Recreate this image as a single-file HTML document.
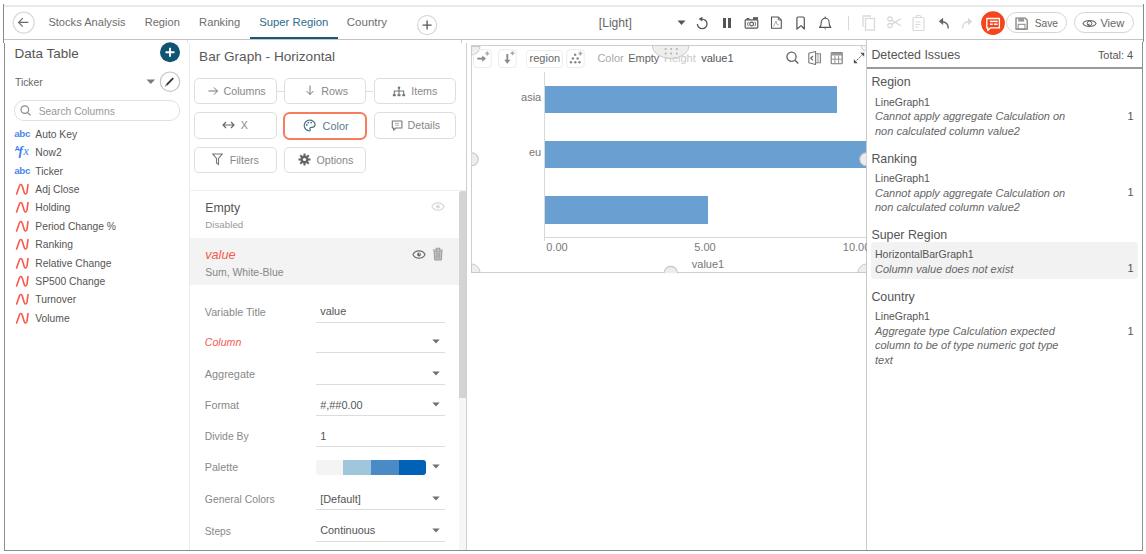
<!DOCTYPE html>
<html><head><meta charset="utf-8"><style>
html,body{margin:0;padding:0;width:1146px;height:554px;overflow:hidden;background:#fff}
body{position:relative;font-family:"Liberation Sans", sans-serif}
body>div{position:absolute}
.t{white-space:nowrap;line-height:1}
</style></head><body>
<div style="left:0px;top:0px;width:1146px;height:554px;background:#fff"></div>
<div style="left:4px;top:5px;width:1140px;height:2px;background:#e8e9ec"></div>
<div style="left:3px;top:4px;width:1px;height:38.5px;background:#8a8a8a"></div>
<div style="left:4px;top:42.5px;width:1px;height:508.5px;background:#8e8e8e"></div>
<div style="left:4px;top:550px;width:1139px;height:1px;background:#8e8e8e"></div>
<div style="left:1143px;top:4px;width:1px;height:38px;background:#8a8a8a"></div>
<div style="left:1142px;top:42px;width:1px;height:509px;background:#8e8e8e"></div>
<div style="left:4px;top:39px;width:1139px;height:1px;background:#c4c4c4"></div>
<svg style="position:absolute;left:12px;top:11px" width="24" height="24" viewBox="0 0 24 24"><circle cx="11.7" cy="11.6" r="10.5" fill="none" stroke="#dcdcdc" stroke-width="1.3"/><path d="M6.8 11.4h9.6M10.8 7.1l-4.2 4.3 4.2 4.3" fill="none" stroke="#6a6a6a" stroke-width="1.2"/></svg>
<div class="t" style="left:48.4px;top:17.40px;font-size:11.1px;color:#6d6d6d;">Stocks Analysis</div>
<div class="t" style="left:144.7px;top:17.40px;font-size:11.1px;color:#6d6d6d;">Region</div>
<div class="t" style="left:199.1px;top:17.40px;font-size:11.2px;color:#6d6d6d;">Ranking</div>
<div class="t" style="left:259.2px;top:17.40px;font-size:11.3px;color:#2e6b8c;">Super Region</div>
<div class="t" style="left:346.8px;top:17.40px;font-size:11.5px;color:#6d6d6d;">Country</div>
<div style="left:250px;top:37px;width:88px;height:2px;background:#1b5876"></div>
<svg style="position:absolute;left:416px;top:14px" width="22" height="22" viewBox="0 0 22 22"><circle cx="11.1" cy="11.1" r="9.6" fill="none" stroke="#d6d6d6" stroke-width="1.2"/><path d="M11.1 6.6v9M6.6 11.1h9" stroke="#555" stroke-width="1.3"/></svg>
<div class="t" style="left:598.8px;top:16.70px;font-size:12.1px;color:#666;">[Light]</div>
<svg style="position:absolute;left:677px;top:20px" width="9" height="6" viewBox="0 0 9 6"><path d="M0.5 0.5h8l-4 4.5z" fill="#555"/></svg>
<svg style="position:absolute;left:695px;top:17px" width="14" height="14" viewBox="0 0 14 14"><path d="M7.2 2.1A4.8 4.8 0 1 1 2.4 6.9" fill="none" stroke="#555" stroke-width="1.3"/><path d="M3.6 2.1L7.4 -0.3V4.5z" fill="#555"/></svg>
<div style="left:723.2px;top:18px;width:2.8px;height:10px;background:#555"></div>
<div style="left:728.1px;top:18px;width:2.8px;height:10px;background:#555"></div>
<svg style="position:absolute;left:743px;top:16px" width="17" height="14" viewBox="0 0 17 14"><rect x="2.2" y="3.8" width="12.6" height="8.3" rx="0.8" fill="none" stroke="#555" stroke-width="1.2"/><path d="M3 3.5l1-1.6h2l1 1.6" fill="#555"/><rect x="10" y="1.2" width="5" height="2.4" fill="#555"/><path d="M5.3 5.8a4 4 0 0 0 0 4.4M11.9 5.8a4 4 0 0 1 0 4.4" fill="none" stroke="#666" stroke-width="0.9"/><circle cx="8.6" cy="8" r="1.9" fill="none" stroke="#555" stroke-width="1.1"/></svg>
<svg style="position:absolute;left:769px;top:16px" width="14" height="15" viewBox="0 0 14 15"><path d="M2.5 1h6.8l3 3v8.3h-9.8z" fill="none" stroke="#555" stroke-width="1.1"/><path d="M9.3 1v3h3" fill="none" stroke="#666" stroke-width="0.9"/><path d="M4.5 10.5l2.5-5.5 0.6 3 2.5 1" fill="none" stroke="#999" stroke-width="0.8"/></svg>
<svg style="position:absolute;left:795px;top:16px" width="12" height="15" viewBox="0 0 12 15"><path d="M1.9 13V2.2q0-1.2 1.2-1.2h5q1.2 0 1.2 1.2V13L6.1 9.6z" fill="none" stroke="#555" stroke-width="1.2" stroke-linejoin="round"/></svg>
<svg style="position:absolute;left:818px;top:16px" width="15" height="15" viewBox="0 0 15 15"><path d="M1.5 11.4c1.6-1.4 1.8-2.8 1.8-5.2a3.9 3.9 0 0 1 7.8 0c0 2.4 .2 3.8 1.8 5.2z" fill="none" stroke="#555" stroke-width="1.1" stroke-linejoin="round"/><path d="M6.2 12.5h2l-1 1.2z" fill="#555"/><circle cx="7.2" cy="1.2" r=".8" fill="#555"/></svg>
<div style="left:848px;top:16px;width:1px;height:14px;background:#d8d8d8"></div>
<svg style="position:absolute;left:861px;top:14px" width="17" height="18" viewBox="0 0 17 18"><rect x="4.5" y="4.5" width="9" height="11.5" fill="none" stroke="#d9d9d9" stroke-width="1.3"/><path d="M2 13V2h8" fill="none" stroke="#d9d9d9" stroke-width="1.3"/></svg>
<svg style="position:absolute;left:887px;top:16px" width="15" height="13" viewBox="0 0 15 13"><circle cx="3" cy="3" r="2.2" fill="none" stroke="#d5d5d5" stroke-width="1.2"/><circle cx="3" cy="9.5" r="2.2" fill="none" stroke="#d5d5d5" stroke-width="1.2"/><path d="M4.8 4.2l9 5.5M4.8 8.3l9-5.5" stroke="#d5d5d5" stroke-width="1.2"/></svg>
<svg style="position:absolute;left:912px;top:14px" width="13" height="18" viewBox="0 0 13 18"><rect x="1" y="3.5" width="11" height="13" rx="1" fill="none" stroke="#dadada" stroke-width="1.2"/><path d="M4 3.5l1-2h3l1 2z" fill="none" stroke="#dadada" stroke-width="1.1"/><path d="M3.5 8h5M3.5 10.5h5M3.5 13h3" stroke="#dadada" stroke-width="1"/></svg>
<svg style="position:absolute;left:938px;top:17px" width="12" height="12" viewBox="0 0 12 12"><path d="M10.3 11.5c0-4-2-6.8-6.5-6.8" fill="none" stroke="#666" stroke-width="1.4"/><path d="M0.8 4.3l4.3-3.6v7.4z" fill="#666"/></svg>
<svg style="position:absolute;left:961px;top:17px" width="12" height="12" viewBox="0 0 12 12"><path d="M1.5 11.5c0-4 2-7 7-7" fill="none" stroke="#d8d8d8" stroke-width="1.3"/><path d="M11.2 4.5l-4.2-3.8v7.6z" fill="#d8d8d8"/></svg>
<svg style="position:absolute;left:981px;top:10.5px" width="25" height="25" viewBox="0 0 25 25"><circle cx="12" cy="12.1" r="11.9" fill="#f4461c"/><path d="M5.8 7.5h12.6v9.4h-9l-2.6 2.6v-2.6h-1z" fill="none" stroke="#fff" stroke-width="1.3" stroke-linejoin="round"/><path d="M9 10.4h7.6" stroke="#fff" stroke-width="1.5"/><path d="M9 13.2h2.8M13 13.2h3.6" stroke="#fff" stroke-width="1.5"/></svg>
<div style="left:1006px;top:11.5px;width:61px;height:21.5px;border:1px solid #d4d4d4;border-radius:11px;box-sizing:border-box"></div>
<svg style="position:absolute;left:1015px;top:17px" width="13" height="13" viewBox="0 0 13 13"><path d="M1 1h9.2l2 2v9.2H1z" fill="none" stroke="#777" stroke-width="1.2"/><rect x="3.2" y="1" width="6" height="3.6" fill="#999"/><rect x="3.2" y="7.3" width="6.8" height="4.9" fill="none" stroke="#888" stroke-width="1"/></svg>
<div class="t" style="left:1034.7px;top:18.70px;font-size:10.2px;color:#666;">Save</div>
<div style="left:1073.5px;top:11.5px;width:60px;height:21.5px;border:1px solid #d4d4d4;border-radius:11px;box-sizing:border-box"></div>
<svg style="position:absolute;left:1082px;top:18px" width="15" height="11" viewBox="0 0 15 11"><path d="M0.9 5.5C3.2 1.6 11.8 1.6 14.1 5.5 11.8 9.4 3.2 9.4 0.9 5.5z" fill="none" stroke="#666" stroke-width="1.05"/><circle cx="7.5" cy="5.5" r="2.3" fill="none" stroke="#666" stroke-width="1"/><path d="M7.5 5.5L5.4 6.6A2.3 2.3 0 0 0 7.5 7.8z" fill="#666"/></svg>
<div class="t" style="left:1100.4px;top:17.70px;font-size:11.1px;color:#666;">View</div>
<div style="left:189px;top:43px;width:1px;height:507px;background:#ececec"></div>
<div style="left:186.5px;top:40px;width:1px;height:3px;background:#e0e0e0"></div>
<div class="t" style="left:14.5px;top:46.80px;font-size:13.5px;color:#555;">Data Table</div>
<svg style="position:absolute;left:159px;top:42px" width="22" height="22" viewBox="0 0 22 22"><circle cx="11" cy="10.3" r="10" fill="#0f5472"/><path d="M11 5.8v9M6.5 10.3h9" stroke="#fff" stroke-width="1.9"/></svg>
<div class="t" style="left:15px;top:78.10px;font-size:10.3px;color:#666;">Ticker</div>
<svg style="position:absolute;left:145.5px;top:78.6px" width="10" height="6" viewBox="0 0 10 6"><path d="M0.5 0.5h8.6l-4.3 4.6z" fill="#7a7a7a"/></svg>
<svg style="position:absolute;left:159px;top:71px" width="22" height="22" viewBox="0 0 22 22"><circle cx="11" cy="10.7" r="9.7" fill="none" stroke="#c4c4c4" stroke-width="1.2"/><path d="M7.6 13.8l6.6-6.6" stroke="#333" stroke-width="1.9"/><path d="M6.2 15.2l1.6-1.6" stroke="#c07a40" stroke-width="1.3"/></svg>
<div style="left:13.9px;top:100.3px;width:166px;height:20.4px;border:1.2px solid #e0e0e0;border-radius:10px;box-sizing:border-box"></div>
<svg style="position:absolute;left:19px;top:103.5px" width="13" height="13" viewBox="0 0 13 13"><circle cx="5.8" cy="5.6" r="3.8" fill="none" stroke="#8a8a8a" stroke-width="1.2"/><path d="M8.5 8.4l3 3" stroke="#8a8a8a" stroke-width="1.3"/></svg>
<div class="t" style="left:38.7px;top:106.50px;font-size:10.3px;color:#999;">Search Columns</div>
<div class="t" style="left:35.3px;top:129.80px;font-size:10.3px;color:#555;">Auto Key</div>
<div class="t" style="left:14.2px;top:129.00px;font-size:9.8px;color:#4d86ee;font-weight:bold;letter-spacing:-0.35px">abc</div>
<div class="t" style="left:35.3px;top:148.19px;font-size:10.3px;color:#555;">Now2</div>
<div class="t" style="left:18.6px;top:143.99px;font-size:13.5px;color:#3f80f0;font-family:'Liberation Serif',serif;font-style:italic;font-weight:bold">f</div>
<div class="t" style="left:23.6px;top:144.89px;font-size:12px;color:#3f80f0;font-family:'Liberation Serif',serif;font-style:italic">x</div>
<div class="t" style="left:14.8px;top:145.79px;font-size:6.8px;color:#3f80f0;font-weight:bold">A</div>
<div class="t" style="left:35.3px;top:166.58px;font-size:10.3px;color:#555;">Ticker</div>
<div class="t" style="left:14.2px;top:165.78px;font-size:9.8px;color:#4d86ee;font-weight:bold;letter-spacing:-0.35px">abc</div>
<div class="t" style="left:35.3px;top:184.97px;font-size:10.3px;color:#555;">Adj Close</div>
<svg style="position:absolute;left:15px;top:182.96999999999997px" width="14" height="13" viewBox="0 0 14 13"><path d="M1.6 11L4.3 3.2Q5 1.3 6 1.5T7.4 3.6L9.2 9.4Q9.7 11.2 10.6 11T12 9.2L13 1.6" fill="none" stroke="#f65a4c" stroke-width="1.6" stroke-linecap="round" stroke-linejoin="round"/></svg>
<div class="t" style="left:35.3px;top:203.36px;font-size:10.3px;color:#555;">Holding</div>
<svg style="position:absolute;left:15px;top:201.35999999999999px" width="14" height="13" viewBox="0 0 14 13"><path d="M1.6 11L4.3 3.2Q5 1.3 6 1.5T7.4 3.6L9.2 9.4Q9.7 11.2 10.6 11T12 9.2L13 1.6" fill="none" stroke="#f65a4c" stroke-width="1.6" stroke-linecap="round" stroke-linejoin="round"/></svg>
<div class="t" style="left:35.3px;top:221.75px;font-size:10.3px;color:#555;">Period Change %</div>
<svg style="position:absolute;left:15px;top:219.75px" width="14" height="13" viewBox="0 0 14 13"><path d="M1.6 11L4.3 3.2Q5 1.3 6 1.5T7.4 3.6L9.2 9.4Q9.7 11.2 10.6 11T12 9.2L13 1.6" fill="none" stroke="#f65a4c" stroke-width="1.6" stroke-linecap="round" stroke-linejoin="round"/></svg>
<div class="t" style="left:35.3px;top:240.14px;font-size:10.3px;color:#555;">Ranking</div>
<svg style="position:absolute;left:15px;top:238.14px" width="14" height="13" viewBox="0 0 14 13"><path d="M1.6 11L4.3 3.2Q5 1.3 6 1.5T7.4 3.6L9.2 9.4Q9.7 11.2 10.6 11T12 9.2L13 1.6" fill="none" stroke="#f65a4c" stroke-width="1.6" stroke-linecap="round" stroke-linejoin="round"/></svg>
<div class="t" style="left:35.3px;top:258.53px;font-size:10.3px;color:#555;">Relative Change</div>
<svg style="position:absolute;left:15px;top:256.53000000000003px" width="14" height="13" viewBox="0 0 14 13"><path d="M1.6 11L4.3 3.2Q5 1.3 6 1.5T7.4 3.6L9.2 9.4Q9.7 11.2 10.6 11T12 9.2L13 1.6" fill="none" stroke="#f65a4c" stroke-width="1.6" stroke-linecap="round" stroke-linejoin="round"/></svg>
<div class="t" style="left:35.3px;top:276.92px;font-size:10.3px;color:#555;">SP500 Change</div>
<svg style="position:absolute;left:15px;top:274.92px" width="14" height="13" viewBox="0 0 14 13"><path d="M1.6 11L4.3 3.2Q5 1.3 6 1.5T7.4 3.6L9.2 9.4Q9.7 11.2 10.6 11T12 9.2L13 1.6" fill="none" stroke="#f65a4c" stroke-width="1.6" stroke-linecap="round" stroke-linejoin="round"/></svg>
<div class="t" style="left:35.3px;top:295.31px;font-size:10.3px;color:#555;">Turnover</div>
<svg style="position:absolute;left:15px;top:293.31px" width="14" height="13" viewBox="0 0 14 13"><path d="M1.6 11L4.3 3.2Q5 1.3 6 1.5T7.4 3.6L9.2 9.4Q9.7 11.2 10.6 11T12 9.2L13 1.6" fill="none" stroke="#f65a4c" stroke-width="1.6" stroke-linecap="round" stroke-linejoin="round"/></svg>
<div class="t" style="left:35.3px;top:313.70px;font-size:10.3px;color:#555;">Volume</div>
<svg style="position:absolute;left:15px;top:311.7px" width="14" height="13" viewBox="0 0 14 13"><path d="M1.6 11L4.3 3.2Q5 1.3 6 1.5T7.4 3.6L9.2 9.4Q9.7 11.2 10.6 11T12 9.2L13 1.6" fill="none" stroke="#f65a4c" stroke-width="1.6" stroke-linecap="round" stroke-linejoin="round"/></svg>
<div class="t" style="left:199.1px;top:49.90px;font-size:13.6px;color:#5a5a5a;">Bar Graph - Horizontal</div>
<div style="left:194px;top:77.5px;width:82.5px;height:26.5px;border:1px solid #dedede;border-radius:5px;box-sizing:border-box"></div>
<div class="t" style="left:223.5px;top:85.60px;font-size:10.7px;color:#888;">Columns</div>
<div style="left:283.7px;top:77.5px;width:82.5px;height:26.5px;border:1px solid #dedede;border-radius:5px;box-sizing:border-box"></div>
<div class="t" style="left:321.3px;top:85.60px;font-size:10.7px;color:#888;">Rows</div>
<div style="left:373.5px;top:77.5px;width:82.5px;height:26.5px;border:1px solid #dedede;border-radius:5px;box-sizing:border-box"></div>
<div class="t" style="left:411.2px;top:85.60px;font-size:10.7px;color:#888;">Items</div>
<div style="left:276.5px;top:90.5px;width:7px;height:1px;background:#dedede"></div>
<div style="left:366.2px;top:90.5px;width:7px;height:1px;background:#dedede"></div>
<div style="left:194px;top:112px;width:82.5px;height:26.5px;border:1px solid #dedede;border-radius:5px;box-sizing:border-box"></div>
<div class="t" style="left:240.8px;top:120.10px;font-size:10.7px;color:#888;">X</div>
<div style="left:283.1px;top:111.8px;width:84.2px;height:28px;border:2px solid #f57d5e;border-radius:6.5px;box-sizing:border-box"></div>
<div class="t" style="left:322.6px;top:120.80px;font-size:10.9px;color:#557a92;">Color</div>
<div style="left:373.5px;top:112px;width:82.5px;height:26.5px;border:1px solid #dedede;border-radius:5px;box-sizing:border-box"></div>
<div class="t" style="left:407.5px;top:120.10px;font-size:10.7px;color:#888;">Details</div>
<div style="left:194px;top:146.5px;width:82.5px;height:26.5px;border:1px solid #dedede;border-radius:5px;box-sizing:border-box"></div>
<div class="t" style="left:229.7px;top:154.60px;font-size:10.7px;color:#888;">Filters</div>
<div style="left:283.7px;top:146.5px;width:82.5px;height:26.5px;border:1px solid #dedede;border-radius:5px;box-sizing:border-box"></div>
<div class="t" style="left:316.5px;top:154.60px;font-size:10.7px;color:#888;">Options</div>
<svg style="position:absolute;left:207.5px;top:85.5px" width="11" height="10" viewBox="0 0 11 10"><path d="M0.5 5h9M6 1.5l3.5 3.5L6 8.5" fill="none" stroke="#777" stroke-width="1"/></svg>
<svg style="position:absolute;left:305px;top:85px" width="10" height="11" viewBox="0 0 10 11"><path d="M5 0.5v9M1.5 6l3.5 3.5L8.5 6" fill="none" stroke="#777" stroke-width="1"/></svg>
<svg style="position:absolute;left:392px;top:86px" width="14" height="11" viewBox="0 0 14 11"><path d="M7 2v2.5M2.3 9V5h9.4v4M7 5v4" fill="none" stroke="#777" stroke-width="1.1"/><circle cx="7" cy="1.8" r="1.3" fill="#777"/><rect x="0.8" y="8.2" width="3" height="2" fill="#777"/><rect x="5.5" y="8.2" width="3" height="2" fill="#777"/><rect x="10.2" y="8.2" width="3" height="2" fill="#777"/></svg>
<svg style="position:absolute;left:222px;top:120px" width="13" height="10" viewBox="0 0 13 10"><path d="M1 5h11M4 2L1 5l3 3M9 2l3 3-3 3" fill="none" stroke="#666" stroke-width="1.1"/></svg>
<svg style="position:absolute;left:303px;top:119px" width="13" height="13" viewBox="0 0 13 13"><path d="M6.5 1.2a5.3 5.3 0 1 0 0 10.6c1 0 1-1 .5-1.7-.6-.8 0-1.7 1-1.7h1.5a3 3 0 0 0 2.6-2.9c0-2.4-2.5-4.3-5.6-4.3z" fill="none" stroke="#4d7389" stroke-width="1.2"/><circle cx="3.8" cy="6" r=".9" fill="#4d7389"/><circle cx="5.3" cy="3.6" r=".9" fill="#4d7389"/><circle cx="8.2" cy="3.6" r=".9" fill="#4d7389"/></svg>
<svg style="position:absolute;left:391px;top:120px" width="12" height="12" viewBox="0 0 12 12"><path d="M1.3 1h9.6v7H4.8l-2.2 2.2V8H1.3z" fill="none" stroke="#777" stroke-width="1.1" stroke-linejoin="round"/><path d="M4 3.3h4M4.2 5.3h3.6" stroke="#999" stroke-width=".8"/></svg>
<svg style="position:absolute;left:212px;top:153px" width="11" height="13" viewBox="0 0 11 13"><path d="M0.8 1h9.4L6.5 5.5v6L4.5 10V5.5z" fill="none" stroke="#777" stroke-width="1.1"/></svg>
<svg style="position:absolute;left:298px;top:153px" width="13" height="13" viewBox="0 0 13 13"><g fill="#666"><circle cx="6.5" cy="6.5" r="4"/><rect x="5.5" y="0.5" width="2" height="12"/><rect x="0.5" y="5.5" width="12" height="2"/><rect x="5.5" y="0.5" width="2" height="12" transform="rotate(45 6.5 6.5)"/><rect x="5.5" y="0.5" width="2" height="12" transform="rotate(-45 6.5 6.5)"/></g><circle cx="6.5" cy="6.5" r="1.6" fill="#fff"/></svg>
<div style="left:190px;top:190px;width:276px;height:1px;background:#efefef"></div>
<div class="t" style="left:205.2px;top:202.00px;font-size:12.3px;color:#555;">Empty</div>
<div class="t" style="left:205.2px;top:219.90px;font-size:9.8px;color:#999;">Disabled</div>
<svg style="position:absolute;left:430.5px;top:200.5px" width="14" height="11" viewBox="0 0 14 11"><path d="M0.9 5.5C3.2 0.6 10.8 0.6 13.1 5.5 10.8 10.4 3.2 10.4 0.9 5.5z" fill="none" stroke="#d6d6d6" stroke-width="1.1"/><circle cx="7" cy="5.5" r="1.9" fill="#d6d6d6"/><circle cx="7.6" cy="4.9" r=".6" fill="#fff"/></svg>
<div style="left:190px;top:238.3px;width:269px;height:46.7px;background:#f3f3f3"></div>
<div class="t" style="left:205.2px;top:249.30px;font-size:12.7px;color:#f25a50;font-style:italic">value</div>
<div class="t" style="left:205.2px;top:267.90px;font-size:10.45px;color:#888;">Sum, White-Blue</div>
<svg style="position:absolute;left:412px;top:248.5px" width="14" height="11" viewBox="0 0 14 11"><path d="M0.9 5.5C3.2 0.6 10.8 0.6 13.1 5.5 10.8 10.4 3.2 10.4 0.9 5.5z" fill="none" stroke="#6a6a6a" stroke-width="1.1"/><circle cx="7" cy="5.5" r="1.9" fill="#6a6a6a"/><circle cx="7.6" cy="4.9" r=".6" fill="#f3f3f3"/></svg>
<svg style="position:absolute;left:432px;top:247px" width="12" height="14" viewBox="0 0 12 14"><path d="M0.8 3h10M4.3 3V1.2h3.4V3" fill="none" stroke="#999" stroke-width="1.1"/><path d="M2 4.2h8l-.7 8.8H2.7z" fill="#c4c4c4" stroke="#999" stroke-width="1"/><path d="M4.4 5.5v6M6 5.5v6M7.6 5.5v6" stroke="#999" stroke-width=".8"/></svg>
<div style="left:459px;top:191px;width:7.5px;height:207px;background:#d4d4d4;border-radius:3px 3px 0 0"></div>
<div style="left:459px;top:398px;width:7.5px;height:152px;background:#f6f6f6"></div>
<div style="left:466px;top:43px;width:1px;height:507px;background:#cfcfcf"></div>
<div style="left:461px;top:40px;width:1px;height:3px;background:#cccccc"></div>
<div class="t" style="left:204.8px;top:306.70px;font-size:10.7px;color:#888;">Variable Title</div>
<div class="t" style="left:320.2px;top:306.40px;font-size:10.9px;color:#555;">value</div>
<div style="left:315.5px;top:321.8px;width:129.5px;height:1px;background:#dcdcdc"></div>
<div class="t" style="left:204.8px;top:337.20px;font-size:10.6px;color:#f25a50;font-style:italic">Column</div>
<div class="t" style="left:320.2px;top:336.90px;font-size:10.9px;color:#555;"></div>
<div style="left:315.5px;top:352.3px;width:129.5px;height:1px;background:#dcdcdc"></div>
<svg style="position:absolute;left:432.2px;top:339.3px" width="8" height="5" viewBox="0 0 8 5"><path d="M0.3 0.5h7.4l-3.7 3.9z" fill="#707070"/></svg>
<div class="t" style="left:204.8px;top:368.70px;font-size:10.9px;color:#888;">Aggregate</div>
<div class="t" style="left:320.2px;top:368.40px;font-size:10.9px;color:#555;"></div>
<div style="left:315.5px;top:383.8px;width:129.5px;height:1px;background:#dcdcdc"></div>
<svg style="position:absolute;left:432.2px;top:370.8px" width="8" height="5" viewBox="0 0 8 5"><path d="M0.3 0.5h7.4l-3.7 3.9z" fill="#707070"/></svg>
<div class="t" style="left:204.8px;top:400.00px;font-size:10.8px;color:#888;">Format</div>
<div class="t" style="left:320.2px;top:399.70px;font-size:10.9px;color:#555;">#,##0.00</div>
<div style="left:315.5px;top:415.1px;width:129.5px;height:1px;background:#dcdcdc"></div>
<svg style="position:absolute;left:432.2px;top:402.1px" width="8" height="5" viewBox="0 0 8 5"><path d="M0.3 0.5h7.4l-3.7 3.9z" fill="#707070"/></svg>
<div class="t" style="left:204.8px;top:432.20px;font-size:10.4px;color:#888;">Divide By</div>
<div class="t" style="left:320.2px;top:430.90px;font-size:10.9px;color:#555;">1</div>
<div style="left:315.5px;top:446.3px;width:129.5px;height:1px;background:#dcdcdc"></div>
<div class="t" style="left:204.8px;top:462.20px;font-size:10.7px;color:#888;">Palette</div>
<svg style="position:absolute;left:432.2px;top:464.3px" width="8" height="5" viewBox="0 0 8 5"><path d="M0.3 0.5h7.4l-3.7 3.9z" fill="#707070"/></svg>
<div class="t" style="left:204.8px;top:495.20px;font-size:10.4px;color:#888;">General Colors</div>
<div class="t" style="left:320.2px;top:493.90px;font-size:10.9px;color:#555;">[Default]</div>
<div style="left:315.5px;top:509.3px;width:129.5px;height:1px;background:#dcdcdc"></div>
<svg style="position:absolute;left:432.2px;top:496.3px" width="8" height="5" viewBox="0 0 8 5"><path d="M0.3 0.5h7.4l-3.7 3.9z" fill="#707070"/></svg>
<div class="t" style="left:204.8px;top:526.50px;font-size:10.2px;color:#888;">Steps</div>
<div class="t" style="left:320.2px;top:525.20px;font-size:10.9px;color:#555;">Continuous</div>
<div style="left:315.5px;top:540.5999999999999px;width:129.5px;height:1px;background:#dcdcdc"></div>
<svg style="position:absolute;left:432.2px;top:527.5999999999999px" width="8" height="5" viewBox="0 0 8 5"><path d="M0.3 0.5h7.4l-3.7 3.9z" fill="#707070"/></svg>
<div style="left:315.8px;top:459.8px;width:110.5px;height:14.8px;border-radius:3px;overflow:hidden;display:flex"><div style="position:static;flex:1;background:#f4f4f4"></div><div style="position:static;flex:1;background:#9fc6db"></div><div style="position:static;flex:1;background:#4a8bc6"></div><div style="position:static;flex:1;background:#0062b6"></div></div>
<div style="left:471px;top:45px;width:396px;height:228px;border:1px solid #cfcfcf;border-right:none;box-sizing:border-box"></div>
<div style="left:866px;top:40px;width:1px;height:510px;background:#c9c9c9"></div>
<svg style="position:absolute;left:471px;top:45.5px" width="10" height="10" viewBox="0 0 10 10"><path d="M0.5 0.5H9A8.5 8.5 0 0 1 0.5 9z" fill="#eeeeee" stroke="#c8c8c8" stroke-width="1"/></svg>
<svg style="position:absolute;left:471px;top:263px" width="10" height="10" viewBox="0 0 10 10"><path d="M0.5 9.5H9A8.5 8.5 0 0 0 0.5 1z" fill="#eeeeee" stroke="#c8c8c8" stroke-width="1"/></svg>
<svg style="position:absolute;left:859px;top:45px" width="8" height="8" viewBox="0 0 8 8"><path d="M7.5 0.5H2A5.5 5.5 0 0 0 7.5 6z" fill="#f3f3f3" stroke="#cccccc" stroke-width="1"/></svg>
<svg style="position:absolute;left:857px;top:263px" width="10" height="10" viewBox="0 0 10 10"><path d="M9.5 9.5H1A8.5 8.5 0 0 1 9.5 1z" fill="#eeeeee" stroke="#c8c8c8" stroke-width="1"/></svg>
<svg style="position:absolute;left:472.5px;top:49.3px" width="19" height="19" viewBox="0 0 19 19"><rect x="0.6" y="0.6" width="17.6" height="18" rx="3.5" fill="none" stroke="#eeeeee" stroke-width="1.1"/><path d="M4.3 9.6h5.5" stroke="#8a8a8a" stroke-width="1.9"/><path d="M9.2 6.5l3.8 3.1-3.8 3.1z" fill="#8a8a8a"/><path d="M14.3 2.6v4M12.3 4.6h4" stroke="#aaa" stroke-width="1.5"/></svg>
<svg style="position:absolute;left:498px;top:49.3px" width="19" height="19" viewBox="0 0 19 19"><rect x="0.6" y="0.6" width="17.6" height="18" rx="3.5" fill="none" stroke="#eeeeee" stroke-width="1.1"/><path d="M9.3 5v6" stroke="#8a8a8a" stroke-width="1.9"/><path d="M6.2 10.8h6.2l-3.1 3.9z" fill="#8a8a8a"/><path d="M14.5 2.3v4M12.5 4.3h4" stroke="#aaa" stroke-width="1.5"/></svg>
<div style="left:526.2px;top:49.6px;width:36.6px;height:18.4px;border:1.1px solid #eeeeee;border-radius:3.5px;box-sizing:border-box"></div>
<div class="t" style="left:529.6px;top:53.20px;font-size:11px;color:#666;">region</div>
<svg style="position:absolute;left:565.5px;top:49.3px" width="19" height="19" viewBox="0 0 19 19"><rect x="0.6" y="0.6" width="17.6" height="18" rx="3.5" fill="none" stroke="#eeeeee" stroke-width="1.1"/><g fill="#8a8a8a"><circle cx="9.2" cy="5.8" r="1.25"/><circle cx="6.9" cy="9.5" r="1.25"/><circle cx="11.6" cy="9.5" r="1.25"/><circle cx="5" cy="13.2" r="1.25"/><circle cx="9.3" cy="13.2" r="1.25"/><circle cx="13.5" cy="13.2" r="1.25"/></g><path d="M14.4 2.4v4M12.4 4.4h4" stroke="#aaa" stroke-width="1.5"/></svg>
<div class="t" style="left:597.4px;top:52.90px;font-size:11px;color:#aaa;">Color</div>
<div class="t" style="left:628.2px;top:52.90px;font-size:11px;color:#666;">Empty</div>
<div class="t" style="left:664px;top:52.90px;font-size:11px;color:#c9c9c9;">Height</div>
<div class="t" style="left:701.2px;top:52.90px;font-size:11px;color:#555;">value1</div>
<svg style="position:absolute;left:651px;top:45px" width="40" height="14" viewBox="0 0 40 14"><path d="M1.2 0.5A18.5 13 0 0 0 38.2 0.5z" fill="#ececec" fill-opacity="0.9" stroke="#c9c9c9" stroke-width="1"/><g fill="#b0b0b0"><circle cx="14.7" cy="4" r="1"/><circle cx="20.2" cy="4" r="1"/><circle cx="25.8" cy="4" r="1"/><circle cx="14.7" cy="8.6" r="1"/><circle cx="20.2" cy="8.6" r="1"/><circle cx="25.8" cy="8.6" r="1"/></g></svg>
<svg style="position:absolute;left:784px;top:49px" width="16" height="16" viewBox="0 0 16 16"><circle cx="7.5" cy="7.7" r="4.6" fill="none" stroke="#666" stroke-width="1.3"/><path d="M10.8 11l3.5 3.5" stroke="#666" stroke-width="1.5"/></svg>
<svg style="position:absolute;left:807px;top:50px" width="16" height="16" viewBox="0 0 16 16"><path d="M1.8 3.2l6.8-1.7v13l-6.8-1.7z" fill="none" stroke="#777" stroke-width="1.1" stroke-linejoin="round"/><path d="M8.6 3.8h4.9v8.9H8.6" fill="none" stroke="#888" stroke-width="1.1"/><path d="M10.3 4v8.5M11.8 4v8.5" stroke="#aaa" stroke-width=".8"/><path d="M6 6l-2.3 2.2L6 10.4" fill="none" stroke="#667" stroke-width="1.2"/></svg>
<svg style="position:absolute;left:830px;top:51px" width="14" height="14" viewBox="0 0 14 14"><rect x="1.2" y="1.5" width="11" height="11.3" rx=".8" fill="none" stroke="#777" stroke-width="1.1"/><rect x="1.2" y="1.5" width="11" height="3" fill="#999"/><path d="M1.2 8.2h11M4.9 4.5v8.3M8.6 4.5v8.3" stroke="#888" stroke-width=".9"/></svg>
<svg style="position:absolute;left:852px;top:51px" width="14" height="14" viewBox="0 0 14 14"><path d="M3.3 10.7l7.4-7.4" stroke="#666" stroke-width="1" stroke-dasharray="1.6 .8"/><path d="M1.8 8.3v4h4zM12.2 1.8h-4l4 4z" fill="#555"/></svg>
<div style="left:544px;top:71.8px;width:1px;height:169px;background:#d9d9d9"></div>
<div style="left:544px;top:237.3px;width:322px;height:1px;background:#d9d9d9"></div>
<div style="left:545px;top:85.9px;width:292px;height:27.1px;background:#6a9fd2"></div>
<div style="left:545px;top:140.8px;width:321px;height:27.1px;background:#6a9fd2"></div>
<div style="left:545px;top:195.8px;width:162.6px;height:27.9px;background:#6a9fd2"></div>
<div class="t" style="right:604.8px;top:92.30px;font-size:11px;color:#777;">asia</div>
<div class="t" style="right:604.8px;top:147.30px;font-size:11px;color:#777;">eu</div>
<div class="t" style="left:546.3px;top:241.90px;font-size:11px;color:#7a7a7a;">0.00</div>
<div class="t" style="left:694.3px;top:241.90px;font-size:11px;color:#7a7a7a;">5.00</div>
<div class="t" style="left:842.8px;top:241.90px;font-size:11px;color:#7a7a7a;">10.00</div>
<div class="t" style="left:691.8px;top:259.10px;font-size:11px;color:#777;">value1</div>
<svg style="position:absolute;left:470.5px;top:151.5px" width="9" height="15" viewBox="0 0 9 15"><path d="M0.7 0.8A6.5 6.5 0 0 1 0.7 13.8" fill="#ededed" stroke="#c6c6c6" stroke-width="1.1"/></svg>
<svg style="position:absolute;left:859px;top:151.5px" width="8" height="15" viewBox="0 0 8 15"><path d="M7.3 0.8A6.5 6.5 0 0 0 7.3 13.8" fill="#ededed" stroke="#c6c6c6" stroke-width="1.1"/></svg>
<svg style="position:absolute;left:663px;top:264.5px" width="16" height="9" viewBox="0 0 16 9"><path d="M1 8.2A6.8 6.8 0 0 1 14.6 8.2" fill="#ededed" stroke="#c6c6c6" stroke-width="1.1"/></svg>
<div style="left:867px;top:40px;width:275px;height:510px;background:#fff"></div>
<div class="t" style="left:871.4px;top:49.20px;font-size:12.4px;color:#555;">Detected Issues</div>
<div class="t" style="right:13px;top:49.90px;font-size:10.9px;color:#555;">Total: 4</div>
<div style="left:867px;top:67px;width:275px;height:2px;background:#9a9a9a"></div>
<div class="t" style="left:871.4px;top:76.30px;font-size:12.4px;color:#555;">Region</div>
<div class="t" style="left:875px;top:96.60px;font-size:10.5px;color:#555;">LineGraph1</div>
<div class="t" style="left:875px;top:111.45px;font-size:11px;color:#666;font-style:italic">Cannot apply aggregate Calculation on</div>
<div class="t" style="left:875px;top:125.90px;font-size:11px;color:#666;font-style:italic">non calculated column value2</div>
<div class="t" style="right:12.5px;top:111.00px;font-size:11px;color:#555;">1</div>
<div class="t" style="left:871.4px;top:152.70px;font-size:12.4px;color:#555;">Ranking</div>
<div class="t" style="left:875px;top:172.70px;font-size:10.5px;color:#555;">LineGraph1</div>
<div class="t" style="left:875px;top:187.55px;font-size:11px;color:#666;font-style:italic">Cannot apply aggregate Calculation on</div>
<div class="t" style="left:875px;top:202.00px;font-size:11px;color:#666;font-style:italic">non calculated column value2</div>
<div class="t" style="right:12.5px;top:187.20px;font-size:11px;color:#555;">1</div>
<div class="t" style="left:871.4px;top:228.50px;font-size:12.4px;color:#555;">Super Region</div>
<div style="left:870.7px;top:242.4px;width:267.5px;height:37.1px;background:#f2f2f2;border-radius:4px"></div>
<div class="t" style="left:875px;top:249.00px;font-size:10.5px;color:#555;">HorizontalBarGraph1</div>
<div class="t" style="left:875px;top:263.85px;font-size:11px;color:#666;font-style:italic">Column value does not exist</div>
<div class="t" style="right:12.5px;top:263.40px;font-size:11px;color:#555;">1</div>
<div class="t" style="left:871.4px;top:290.70px;font-size:12.4px;color:#555;">Country</div>
<div class="t" style="left:875px;top:310.80px;font-size:10.5px;color:#555;">LineGraph1</div>
<div class="t" style="left:875px;top:325.65px;font-size:11px;color:#666;font-style:italic">Aggregate type Calculation expected</div>
<div class="t" style="left:875px;top:340.10px;font-size:11px;color:#666;font-style:italic">column to be of type numeric got type</div>
<div class="t" style="left:875px;top:354.55px;font-size:11px;color:#666;font-style:italic">text</div>
<div class="t" style="right:12.5px;top:325.70px;font-size:11px;color:#555;">1</div>
</body></html>
